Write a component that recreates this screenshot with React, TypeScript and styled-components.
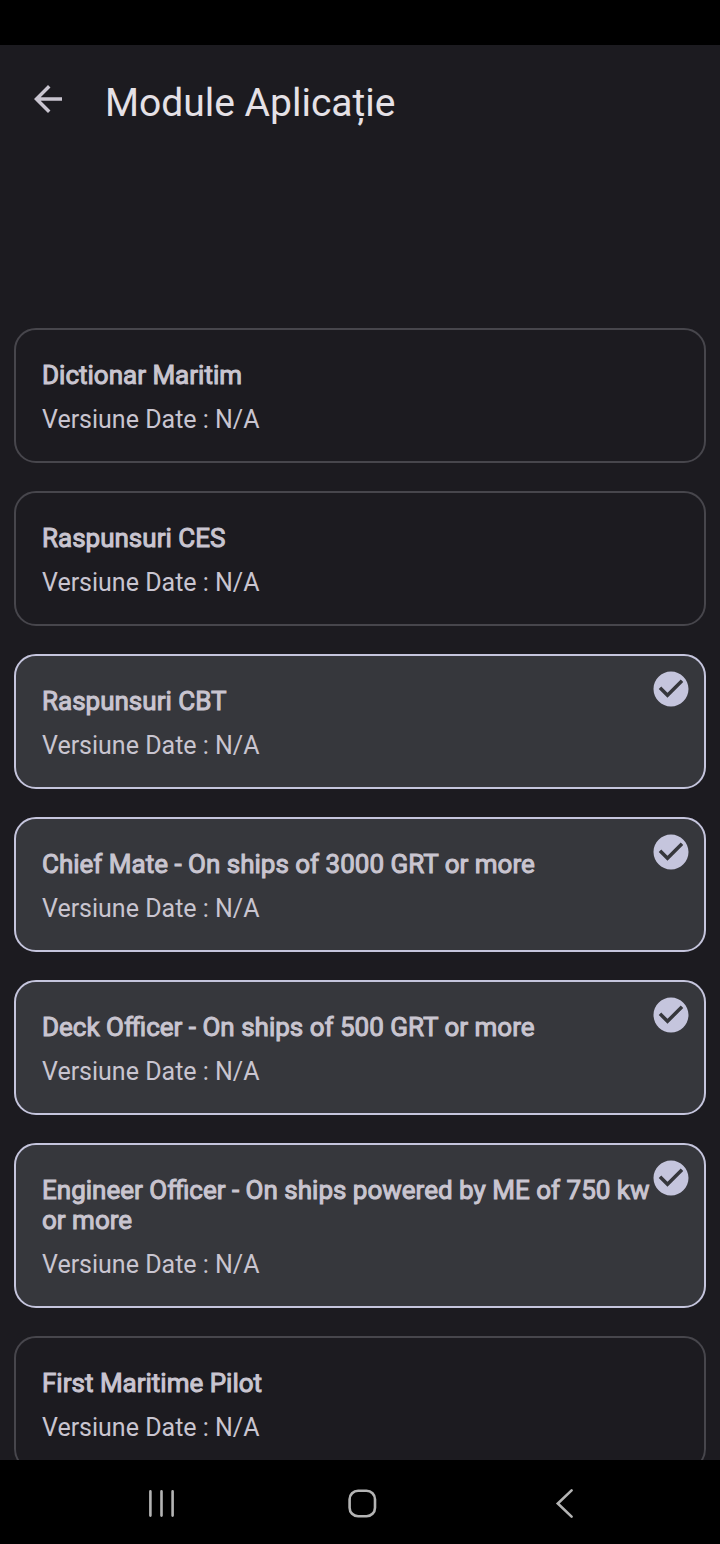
import React, { useState } from 'react';
import styled, { createGlobalStyle } from 'styled-components';

const GlobalStyle = createGlobalStyle`
  * { box-sizing: border-box; }
  body {
    margin: 0;
    background: #1c1b20;
    color: #c9c5d0;
    font-family: Roboto, sans-serif;
  }
`;

const Screen = styled.div`
  display: flex;
  flex-direction: column;
  height: 100vh;
`;

const StatusBar = styled.div`
  flex: none;
  height: 45px;
  background: #000;
`;

const Header = styled.header`
  flex: none;
  display: flex;
  align-items: center;
  gap: 36px;
  height: 116px;
  padding: 0 27px;
`;

const IconButton = styled.button`
  display: flex;
  align-items: center;
  justify-content: center;
  width: 42px;
  height: 42px;
  padding: 0;
  border: 0;
  background: none;
  color: #b4b4b4;
  cursor: pointer;
`;

const BackButton = styled(IconButton)`
  margin-bottom: 8px;
  color: #c9c5d0;
`;

const Title = styled.h1`
  margin: 0;
  color: #e5e1e6;
  font-size: 39px;
  font-weight: 400;
  line-height: 48px;
`;

const List = styled.main`
  flex: 1;
  min-height: 0;
  overflow: auto;
  scrollbar-width: none;
  margin-top: 139px;
  padding: 28px 14px;
  display: flex;
  flex-direction: column;
  gap: 28px;
`;

const Card = styled.label<{ $selected: boolean }>`
  flex: none;
  position: relative;
  display: flex;
  flex-direction: column;
  gap: 15px;
  padding: 30px 26px 26px;
  border: 2px solid ${({ $selected }) => ($selected ? '#c5c5dd' : '#47464c')};
  border-radius: 22px;
  background: ${({ $selected }) => ($selected ? '#36373c' : 'transparent')};
  cursor: pointer;
`;

const CardTitle = styled.span`
  font-size: 26px;
  line-height: 30px;
  -webkit-text-stroke: 1px currentColor;
`;

const CardVersion = styled.span`
  font-size: 25px;
  line-height: 30px;
`;

const Toggle = styled.input`
  position: absolute;
  top: 12px;
  right: 12px;
  width: 42px;
  height: 42px;
  margin: 0;
  opacity: 0;
  cursor: pointer;
`;

const CheckMark = styled.svg`
  position: absolute;
  top: 12px;
  right: 12px;
  width: 42px;
  height: 42px;
  pointer-events: none;
`;

const NavBar = styled.nav`
  flex: none;
  display: flex;
  align-items: center;
  justify-content: space-between;
  height: 84px;
  padding: 2px 134px 0 140px;
  background: #000;
`;

const MODULES = [
  { name: 'Dictionar Maritim', selected: false },
  { name: 'Raspunsuri CES', selected: false },
  { name: 'Raspunsuri CBT', selected: true },
  { name: 'Chief Mate - On ships of 3000 GRT or more', selected: true },
  { name: 'Deck Officer - On ships of 500 GRT or more', selected: true },
  { name: 'Engineer Officer - On ships powered by ME of 750 kw or more', selected: true },
  { name: 'First Maritime Pilot', selected: false },
];

function ModuleCard({ name, initial }: { name: string; initial: boolean }) {
  const [selected, setSelected] = useState(initial);
  return (
    <Card $selected={selected}>
      <CardTitle>{name}</CardTitle>
      <CardVersion>Versiune Date : N/A</CardVersion>
      <Toggle type="checkbox" checked={selected} onChange={() => setSelected(!selected)} />
      {selected && (
        <CheckMark viewBox="0 0 24 24" fill="#c5c5dd" aria-hidden="true">
          <path d="M12 2C6.48 2 2 6.48 2 12s4.48 10 10 10 10-4.48 10-10S17.52 2 12 2zm-2 15l-5-5 1.41-1.41L10 14.17l7.59-7.59L19 8l-9 9z" />
        </CheckMark>
      )}
    </Card>
  );
}

export default function App() {
  return (
    <>
      <GlobalStyle />
      <Screen>
        <StatusBar />
        <Header>
          <BackButton type="button" aria-label="Back">
            <svg width="42" height="42" viewBox="0 0 24 24" fill="currentColor">
              <path d="M20 11H7.83l5.59-5.59L12 4l-8 8 8 8 1.41-1.41L7.83 13H20v-2z" />
            </svg>
          </BackButton>
          <Title>Module Aplicație</Title>
        </Header>
        <List>
          {MODULES.map((m) => (
            <ModuleCard key={m.name} name={m.name} initial={m.selected} />
          ))}
        </List>
        <NavBar>
          <IconButton type="button" aria-label="Recent apps">
            <svg width="42" height="42" viewBox="0 0 42 42" fill="none" stroke="currentColor" strokeWidth="2.6" strokeLinecap="round">
              <path d="M10.4 9.4V33.6M21.5 9.4V33.6M32.6 9.4V33.6" />
            </svg>
          </IconButton>
          <IconButton type="button" aria-label="Home">
            <svg width="42" height="42" viewBox="0 0 42 42" fill="none" stroke="currentColor" strokeWidth="2.6">
              <rect x="7.6" y="8.8" width="25.4" height="25.4" rx="8.5" />
            </svg>
          </IconButton>
          <IconButton type="button" aria-label="Back">
            <svg width="42" height="42" viewBox="0 0 42 42" fill="none" stroke="currentColor" strokeWidth="2.6" strokeLinecap="round">
              <path d="M27.6 8.4L13.8 21.5L27.6 34.6" />
            </svg>
          </IconButton>
        </NavBar>
      </Screen>
    </>
  );
}
